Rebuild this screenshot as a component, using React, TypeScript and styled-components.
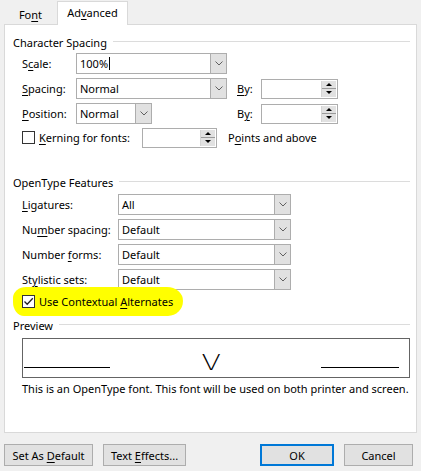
import React from "react";
import styled, { createGlobalStyle } from "styled-components";

const Global = createGlobalStyle`
  html, body { margin: 0; padding: 0; background: #f0f0f0; }
  body {
    font-family: "Noto Sans", "Open Sans", sans-serif;
    font-size: 11px;
    color: #000;
  }
  * { box-sizing: border-box; }
`;

const Dialog = styled.div`
  width: 421px;
  height: 471px;
  display: flex;
  flex-direction: column;
  background: #f0f0f0;
  overflow: hidden;
`;

const TabStrip = styled.div`
  display: flex;
  align-items: flex-end;
  height: 24px;
  padding-left: 4px;
  position: relative;
  z-index: 1;
`;

const Tab = styled.div<{ $active?: boolean; $w: number }>`
  width: ${(p) => p.$w}px;
  height: ${(p) => (p.$active ? 24 : 20)}px;
  margin-bottom: ${(p) => (p.$active ? -1 : 0)}px;
  display: flex;
  align-items: center;
  justify-content: center;
  padding-bottom: ${(p) => (p.$active ? 2 : 0)}px;
  background: ${(p) => (p.$active ? "#fff" : "transparent")};
  border: ${(p) => (p.$active ? "1px solid #d9d9d9" : "none")};
  border-bottom: none;
`;

const Panel = styled.div`
  margin: 0 4px;
  height: 409px;
  border: 1px solid #d9d9d9;
  background: #fff;
  display: flex;
  flex-direction: column;
  padding: 9px 6px 0 8px;
`;

const GroupHeader = styled.div<{ $mt: number }>`
  display: flex;
  align-items: center;
  height: 16px;
  margin-top: ${(p) => p.$mt}px;
  gap: 6px;
  &::after {
    content: "";
    flex: 1;
    height: 1px;
    margin-top: -1px;
    background: #dcdcdc;
  }
`;

const Row = styled.div<{ $mt: number }>`
  display: flex;
  align-items: center;
  height: 21px;
  margin-top: ${(p) => p.$mt}px;
  padding-left: 9px;
`;

const Label = styled.span<{ $w: number; $ml?: number }>`
  width: ${(p) => p.$w}px;
  margin-left: ${(p) => p.$ml ?? 0}px;
  flex: none;
  white-space: nowrap;
`;

const Key = styled.span`
  text-decoration: underline;
  text-underline-offset: 2px;
`;

const Combo = styled.div<{ $w: number }>`
  width: ${(p) => p.$w}px;
  height: 21px;
  flex: none;
  display: flex;
  border: 1px solid #adadad;
  background: #fff;
`;

const ComboText = styled.span`
  flex: 1;
  display: flex;
  align-items: center;
  padding-left: 3px;
`;

const Caret = styled.span`
  width: 1px;
  height: 13px;
  background: #000;
  margin-left: 1px;
`;

const DropBtn = styled.span`
  width: 17px;
  flex: none;
  background: #e1e1e1;
  border: 1px solid #adadad;
  margin: -1px -1px -1px 0;
  display: flex;
  align-items: center;
  justify-content: center;
`;

const Spin = styled.div<{ $w: number; $ml?: number }>`
  width: ${(p) => p.$w}px;
  height: 20px;
  flex: none;
  margin-left: ${(p) => p.$ml ?? 0}px;
  border: 1px solid #adadad;
  background: #fff;
  display: flex;
  justify-content: flex-end;
  padding: 1px;
`;

const SpinBtns = styled.div`
  width: 15px;
  display: flex;
  flex-direction: column;
  background: #e1e1e1;
  border-left: 1px solid #d4d4d4;
`;

const SpinBtn = styled.span<{ $down?: boolean }>`
  flex: 1;
  display: flex;
  align-items: center;
  justify-content: center;
  border-top: ${(p) => (p.$down ? "1px solid #9a9a9a" : "none")};
  &::before {
    content: "";
    border-left: 3px solid transparent;
    border-right: 3px solid transparent;
    ${(p) =>
      p.$down ? "border-top: 3px solid #000;" : "border-bottom: 3px solid #000;"}
  }
`;

const CheckBox = styled.span`
  width: 13px;
  height: 13px;
  flex: none;
  border: 1px solid #333;
  background: #fff;
  display: flex;
  align-items: center;
  justify-content: center;
  margin-right: 4px;
`;

const Text = styled.span<{ $ml?: number }>`
  margin-left: ${(p) => p.$ml ?? 0}px;
  white-space: nowrap;
`;

const HighlightRow = styled.div`
  display: flex;
  align-items: center;
  align-self: flex-start;
  height: 29px;
  margin-top: -3px;
  margin-left: 0;
  padding: 0 10px 0 9px;
  background: #ffff00;
  border-radius: 13px 16px 15px 11px / 11px 14px 15px 14px;
`;

const PreviewBox = styled.div`
  margin: 5px 0 0 9px;
  width: 388px;
  height: 40px;
  border: 1px solid #646464;
  background: #fff;
  display: flex;
  align-items: flex-end;
  padding: 0 10px 9px 1px;
`;

const PreviewLine = styled.span<{ $w: number }>`
  width: ${(p) => p.$w}px;
  height: 1px;
  background: #000;
  flex: none;
`;

const PreviewGlyphCell = styled.span`
  flex: 1;
  display: flex;
  justify-content: center;
  padding-right: 9px;
  margin-bottom: -6px;
`;

const PreviewGlyph = styled.span`
  display: inline-block;
  font-family: "DejaVu Sans", sans-serif;
  font-weight: 200;
  font-size: 21px;
  line-height: 21px;
  color: #000;
  transform: scaleX(1.35);
`;

const Description = styled.div`
  margin: 3px 0 0 9px;
  height: 16px;
  line-height: 16px;
  white-space: nowrap;
`;

const Footer = styled.div`
  display: flex;
  align-items: center;
  padding: 11px 8px 0 4px;
  gap: 10px;
`;

const Spacer = styled.div`
  flex: 1;
`;

const Button = styled.button<{ $w: number; $primary?: boolean }>`
  width: ${(p) => p.$w}px;
  height: 22px;
  font: inherit;
  color: #000;
  background: #e1e1e1;
  border: ${(p) => (p.$primary ? "2px solid #0078d7" : "1px solid #adadad")};
  padding: 0;
  text-align: center;
  white-space: nowrap;
`;

const Chevron = () => (
  <svg width="8" height="5" viewBox="0 0 8 5">
    <path d="M0.5 0.5 L4 4 L7.5 0.5" fill="none" stroke="#606060" strokeWidth="1" />
  </svg>
);

const Check = () => (
  <svg width="11" height="11" viewBox="0 0 11 11">
    <path d="M1.5 5.5 L4.2 8.3 L9.8 2.2" fill="none" stroke="#222" strokeWidth="1.3" />
  </svg>
);

const DropCombo: React.FC<{ w: number; children: React.ReactNode }> = ({ w, children }) => (
  <Combo $w={w}>
    <ComboText>{children}</ComboText>
    <DropBtn>
      <Chevron />
    </DropBtn>
  </Combo>
);

const SpinBox: React.FC<{ w: number; ml?: number }> = ({ w, ml }) => (
  <Spin $w={w} $ml={ml}>
    <SpinBtns>
      <SpinBtn />
      <SpinBtn $down />
    </SpinBtns>
  </Spin>
);

export default function App() {
  return (
    <>
      <Global />
      <Dialog>
        <TabStrip>
          <Tab $w={53}>
            <span>
              Fo<Key>n</Key>t
            </span>
          </Tab>
          <Tab $w={71} $active>
            <span>
              Ad<Key>v</Key>anced
            </span>
          </Tab>
        </TabStrip>
        <Panel>
          <GroupHeader $mt={0}>Character Spacing</GroupHeader>
          <Row $mt={3}>
            <Label $w={54}>
              S<Key>c</Key>ale:
            </Label>
            <DropCombo w={151}>
              100%
              <Caret />
            </DropCombo>
          </Row>
          <Row $mt={4}>
            <Label $w={54}>
              <Key>S</Key>pacing:
            </Label>
            <DropCombo w={151}>Normal</DropCombo>
            <Label $w={24} $ml={10}>
              <Key>B</Key>y:
            </Label>
            <SpinBox w={77} />
          </Row>
          <Row $mt={4}>
            <Label $w={54}>
              <Key>P</Key>osition:
            </Label>
            <DropCombo w={76}>Normal</DropCombo>
            <Label $w={24} $ml={85}>
              B<Key>y</Key>:
            </Label>
            <SpinBox w={77} />
          </Row>
          <Row $mt={3}>
            <CheckBox />
            <Label $w={103}>
              <Key>K</Key>erning for fonts:
            </Label>
            <SpinBox w={75} />
            <Text $ml={11}>
              P<Key>o</Key>ints and above
            </Text>
          </Row>

          <GroupHeader $mt={26}>OpenType Features</GroupHeader>
          <Row $mt={4}>
            <Label $w={96}>
              <Key>L</Key>igatures:
            </Label>
            <DropCombo w={173}>All</DropCombo>
          </Row>
          <Row $mt={4}>
            <Label $w={96}>
              Nu<Key>m</Key>ber spacing:
            </Label>
            <DropCombo w={173}>Default</DropCombo>
          </Row>
          <Row $mt={4}>
            <Label $w={96}>
              Number <Key>f</Key>orms:
            </Label>
            <DropCombo w={173}>Default</DropCombo>
          </Row>
          <Row $mt={4}>
            <Label $w={96}>
              St<Key>y</Key>listic sets:
            </Label>
            <DropCombo w={173}>Default</DropCombo>
          </Row>
          <HighlightRow>
            <CheckBox>
              <Check />
            </CheckBox>
            <Text>
              Use Contextual <Key>A</Key>lternates
            </Text>
          </HighlightRow>

          <GroupHeader $mt={1}>Preview</GroupHeader>
          <PreviewBox>
            <PreviewLine $w={86} />
            <PreviewGlyphCell>
              <PreviewGlyph>V</PreviewGlyph>
            </PreviewGlyphCell>
            <PreviewLine $w={78} />
          </PreviewBox>
          <Description>
            This is an OpenType font. This font will be used on both printer and screen.
          </Description>
        </Panel>
        <Footer>
          <Button $w={89}>
            Set As <Key>D</Key>efault
          </Button>
          <Button $w={83}>
            Text <Key>E</Key>ffects...
          </Button>
          <Spacer />
          <Button $w={74} $primary>
            OK
          </Button>
          <Button $w={69}>Cancel</Button>
        </Footer>
      </Dialog>
    </>
  );
}
